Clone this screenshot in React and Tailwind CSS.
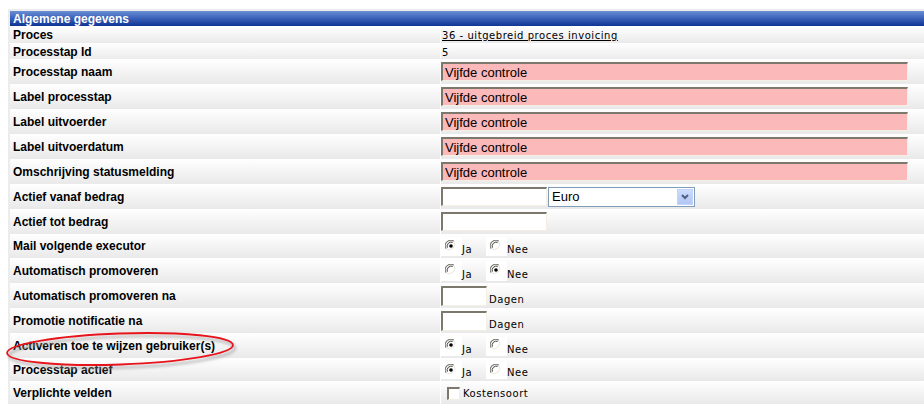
const label = "font-['Liberation_Sans',Arial,sans-serif] text-[12px] font-bold text-black";
const val = "font-['DejaVu_Sans',Verdana,sans-serif] text-[10px] tracking-[0.55px] text-black";

function Radio({ checked }) {
  return (
    <svg width="12" height="12" viewBox="0 0 12 12">
      <circle cx="6" cy="6" r="5.5" fill="#fff" />
      <path d="M1.2 8.8 A5.5 5.5 0 0 1 8.8 1.2" stroke="#7e7c72" strokeWidth="1.1" fill="none" />
      <path d="M2.3 7.7 A4.3 4.3 0 0 1 7.7 2.3" stroke="#3c3c3c" strokeWidth="1" fill="none" />
      <path d="M8.8 1.2 A5.5 5.5 0 0 1 1.2 8.8" stroke="#e9e6d8" strokeWidth="1" fill="none" />
      {checked && <circle cx="6" cy="6" r="1.8" fill="#000" />}
    </svg>
  );
}

function RadioPair({ ja }) {
  return (
    <div className={`flex items-end h-full pt-[3px] pb-[2px] ${val}`}>
      <div className="w-[21px] h-full bg-white flex items-start pl-[4px] pt-[3px]">
        <Radio checked={ja} />
      </div>
      <span className="w-[24px] leading-[12px]">Ja</span>
      <div className="w-[21px] h-full bg-white flex items-start pl-[4px] pt-[3px]">
        <Radio checked={!ja} />
      </div>
      <span className="leading-[12px]">Nee</span>
    </div>
  );
}

function Inset({ className = "", children }) {
  return (
    <div
      className={`border-t-2 border-l-2 border-b border-r border-t-[#7c786c] border-l-[#7c786c] border-b-[#f3efe2] border-r-[#f3efe2] ${className}`}
    >
      {children}
    </div>
  );
}

function Pink() {
  return (
    <Inset className="w-[467px] h-[19px] bg-[#fbb9b9] flex items-center pl-[2px]">
      <span className="font-['Liberation_Sans',Arial,sans-serif] text-[13px] text-black leading-none">
        Vijfde controle
      </span>
    </Inset>
  );
}

function Dagen() {
  return (
    <div className={`flex items-end gap-[2px] ${val}`}>
      <Inset className="w-[46px] h-[20px] bg-white" />
      <span className="leading-[13px]">Dagen</span>
    </div>
  );
}

const rows = [
  { l: "Proces", h: "h-[17px]", v: <span className={`${val} underline pl-[1px]`}>36 - uitgebreid proces invoicing</span> },
  { l: "Processtap Id", h: "h-[16px]", v: <span className={`${val} pl-[1px]`}>5</span> },
  { l: "Processtap naam", h: "h-[25px]", v: <Pink /> },
  { l: "Label processtap", h: "h-[25px]", v: <Pink /> },
  { l: "Label uitvoerder", h: "h-[25px]", v: <Pink /> },
  { l: "Label uitvoerdatum", h: "h-[25px]", v: <Pink /> },
  { l: "Omschrijving statusmelding", h: "h-[25px]", v: <Pink /> },
  {
    l: "Actief vanaf bedrag",
    h: "h-[25px]",
    v: (
      <div className="flex items-center gap-[1px]">
        <Inset className="w-[106px] h-[19px] bg-white" />
        <div className="w-[147px] h-[20px] border border-[#7f9db9] bg-white flex items-center justify-between">
          <span className="font-['Liberation_Sans',Arial,sans-serif] text-[13px] pl-[3px] leading-none">Euro</span>
          <div className="w-[16px] h-[16px] mr-[1px] bg-gradient-to-b from-[#cddcfc] to-[#b2c6f3] border border-[#c3d3fd] flex items-center justify-center">
            <svg width="8" height="6" viewBox="0 0 8 6">
              <path d="M1 1 L4 4 L7 1" stroke="#4d6185" strokeWidth="2" fill="none" />
            </svg>
          </div>
        </div>
      </div>
    ),
  },
  { l: "Actief tot bedrag", h: "h-[25px]", v: <Inset className="w-[106px] h-[19px] bg-white" /> },
  { l: "Mail volgende executor", h: "h-[24px]", v: <RadioPair ja /> },
  { l: "Automatisch promoveren", h: "h-[25px]", v: <RadioPair ja={false} /> },
  { l: "Automatisch promoveren na", h: "h-[25px]", v: <Dagen /> },
  { l: "Promotie notificatie na", h: "h-[25px]", v: <Dagen /> },
  { l: "Activeren toe te wijzen gebruiker(s)", h: "h-[25px]", v: <RadioPair ja /> },
  { l: "Processtap actief", h: "h-[23px]", v: <RadioPair ja /> },
  {
    l: "Verplichte velden",
    h: "h-[23px]",
    v: (
      <div className={`flex items-end gap-[3px] pl-[6px] pt-[2px] ${val}`}>
        <Inset className="w-[13px] h-[13px] bg-white" />
        <span className="leading-[12px]">Kostensoort</span>
      </div>
    ),
  },
];

export default function App() {
  return (
    <div className="relative w-[924px] h-[404px] overflow-hidden bg-white">
      <div className="mt-[9px] ml-[8px] bg-[#ececec] pt-[2px] pl-[2px]">
        <div className="bg-white">
          <div className="h-[15px] bg-gradient-to-b from-[#6a8fd4] via-[#3a5fb8] to-[#0e3594] flex items-center pl-[3px]">
            <span className="font-['Liberation_Sans',Arial,sans-serif] text-[12px] font-bold text-white leading-none">
              Algemene gegevens
            </span>
          </div>
          {rows.map((r) => (
            <div key={r.l} className={`grid grid-cols-[430px_1fr] gap-x-px ${r.h}`}>
              <div className="bg-gradient-to-b from-white to-[#e9e9e9] flex items-center pl-[3px]">
                <span className={label}>{r.l}</span>
              </div>
              <div className="bg-gradient-to-b from-white to-[#e9e9e9] flex items-center">{r.v}</div>
            </div>
          ))}
        </div>
      </div>
      <svg className="absolute left-0 top-0 pointer-events-none" width="924" height="404" viewBox="0 0 924 404">
        <defs>
          <filter id="blur" x="-10%" y="-50%" width="120%" height="200%">
            <feGaussianBlur stdDeviation="1.5" />
          </filter>
        </defs>
        <ellipse cx="122" cy="352" rx="113" ry="15.5" transform="rotate(-2 122 352)" fill="none" stroke="#9a9a9a" strokeWidth="2" filter="url(#blur)" opacity="0.8" />
        <ellipse cx="120" cy="349" rx="113" ry="15.5" transform="rotate(-2 120 349)" fill="none" stroke="#e8141c" strokeWidth="1.8" />
      </svg>
    </div>
  );
}
